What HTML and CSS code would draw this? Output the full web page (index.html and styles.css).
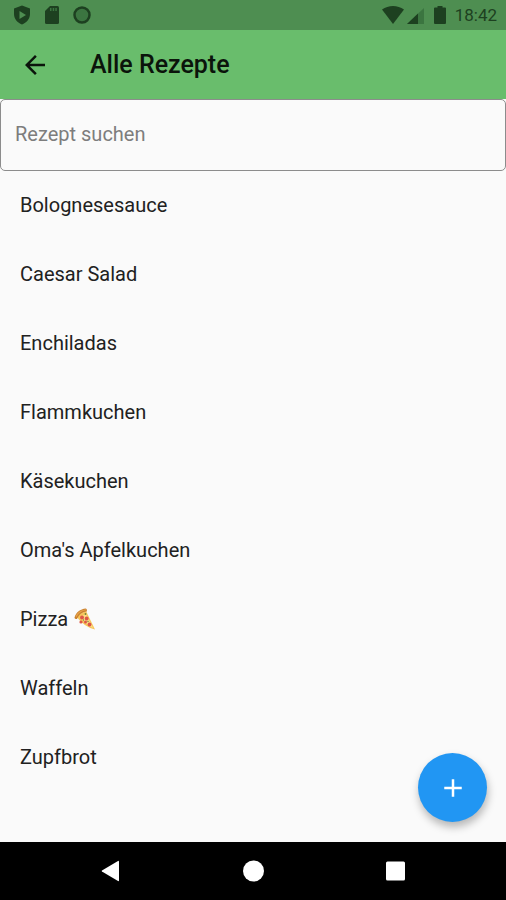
FILE: index.html
```html
<!DOCTYPE html>
<html lang="de">
<head>
<meta charset="utf-8">
<meta name="viewport" content="width=device-width, initial-scale=1">
<title>Alle Rezepte</title>
<link rel="stylesheet" href="styles.css">
</head>
<body>
<div class="status-bar">
  <div class="status-group status-left">
    <svg width="20" height="20" viewBox="0 0 20 20" aria-hidden="true"><path fill-rule="evenodd" d="M10 .5 18 3.500V9c0 5-3.500 8.700-8 10.500C5.500 17.700 2 14 2 9V3.500ZM7.500 6v8l6.500-4Z"/></svg>
    <svg width="20" height="20" viewBox="0 0 20 20" aria-hidden="true"><path d="M8 1h7.500A1.500 1.500 0 0 1 17 2.500v15a1.500 1.500 0 0 1-1.500 1.500h-11A1.500 1.500 0 0 1 3 17.500V6Z"/><path fill="#3b7540" d="M8 3v3h1.500V3Zm2.700 0v3h1.500V3Zm2.600 0v3h1.500V3Z"/></svg>
    <svg width="20" height="20" viewBox="0 0 20 20" aria-hidden="true"><circle cx="10" cy="10" r="7.500" fill="#3b7540" stroke="#1d4020" stroke-width="2.500"/></svg>
  </div>
  <div class="status-group status-right">
    <svg width="22" height="20" viewBox="0 0 22 20" aria-hidden="true"><path d="M0 4.500Q5 1 11 1t11 3.500L11 19Z"/></svg>
    <svg width="17" height="20" viewBox="0 0 17 20" aria-hidden="true"><path fill="#3b7540" d="M17 3v16H0Z"/><path d="M11 8.500V19H0Z"/></svg>
    <svg class="battery" width="12" height="20" viewBox="0 0 12 20" aria-hidden="true"><path d="M3.500 1h5v1.500H11a1 1 0 0 1 1 1V18a1 1 0 0 1-1 1H1a1 1 0 0 1-1-1V3.500a1 1 0 0 1 1-1h2.500Z"/></svg>
    <time class="clock">18:42</time>
  </div>
</div>
<header class="app-bar">
  <button class="back" type="button" aria-label="Zurück">
    <svg width="30" height="30" viewBox="0 0 24 24" aria-hidden="true"><path d="M20 11H7.830l5.590-5.590L12 4l-8 8 8 8 1.410-1.410L7.830 13H20z"/></svg>
  </button>
  <h1 class="title">Alle Rezepte</h1>
</header>
<main class="content">
  <input class="search" type="text" placeholder="Rezept suchen" aria-label="Rezept suchen">
  <ul class="recipes">
    <li class="recipe">Bolognesesauce</li>
    <li class="recipe">Caesar Salad</li>
    <li class="recipe">Enchiladas</li>
    <li class="recipe">Flammkuchen</li>
    <li class="recipe">Käsekuchen</li>
    <li class="recipe">Oma's Apfelkuchen</li>
    <li class="recipe">Pizza
      <svg class="pizza" width="22" height="22" viewBox="0 0 22 22" role="img" aria-label="Pizza">
        <path fill="#f7c65b" d="M2 8 12 3l9 18.500Q10 19 2 8Z"/>
        <path fill="#fbdc84" d="M6 9 12 6l7 14Q11 16 6 9Z"/>
        <path fill="#c9812e" d="M.5 9.500C2 4.500 6 1 12 .5q1.500 1 .8 3C8 4 5 6.500 3 11 1.500 11 .5 10.500.5 9.500Z"/>
        <path fill="#e5a04a" d="M1.500 8.500C3 4.500 6.500 2 12 1.200v1C7.500 3 4.500 5 2.500 9Z"/>
        <g fill="#dd5648"><circle cx="8" cy="9.500" r="2"/><circle cx="12.700" cy="10.500" r="1.900"/><circle cx="7" cy="14" r="1.600"/><circle cx="11.500" cy="14" r="1.500"/><circle cx="15.500" cy="16.500" r="1.900"/></g>
        <g fill="#71843b"><circle cx="11.500" cy="6" r=".9"/><circle cx="9.500" cy="12" r=".7"/><circle cx="14" cy="13.500" r=".7"/></g>
      </svg>
    </li>
    <li class="recipe">Waffeln</li>
    <li class="recipe">Zupfbrot</li>
  </ul>
  <button class="add" type="button" aria-label="Rezept hinzufügen">
    <svg width="30" height="30" viewBox="0 0 24 24" aria-hidden="true"><path d="M19 13h-6v6h-2v-6H5v-2h6V5h2v6h6z"/></svg>
  </button>
</main>
<nav class="nav-bar" aria-label="Systemnavigation">
  <button class="nav-button" type="button" aria-label="Zurück"><svg width="22" height="22" viewBox="0 0 22 22" aria-hidden="true"><path d="M19 1.500v19a.7.7 0 0 1-1 .5L2 11.500a.6.6 0 0 1 0-1L18 1a.7.7 0 0 1 1 .5Z"/></svg></button>
  <button class="nav-button" type="button" aria-label="Startseite"><svg width="22" height="22" viewBox="0 0 22 22" aria-hidden="true"><circle cx="11.500" cy="11" r="10.500"/></svg></button>
  <button class="nav-button" type="button" aria-label="Übersicht"><svg width="22" height="22" viewBox="0 0 22 22" aria-hidden="true"><rect x="2" y="1.500" width="19" height="19" rx="1.500"/></svg></button>
</nav>
</body>
</html>
```
FILE: styles.css
```css
* {
  box-sizing: border-box;
}

body {
  margin: 0;
  min-height: 100vh;
  display: flex;
  flex-direction: column;
  background: #fafafa;
  color: #212121;
  font-family: Roboto, "Liberation Sans", sans-serif;
  font-size: 20px;
}

svg {
  display: block;
  fill: currentColor;
}

button {
  display: grid;
  place-items: center;
  padding: 0;
  border: 0;
  background: none;
  color: inherit;
}

.status-bar {
  display: flex;
  justify-content: space-between;
  align-items: center;
  height: 30px;
  padding: 0 9px 0 12px;
  background: #4e8e51;
  color: #1d4020;
}

.status-group {
  display: flex;
  align-items: center;
}

.status-left {
  gap: 10px;
}

.status-right {
  gap: 3px;
}

.battery {
  margin: 0 6px 0 7px;
}

.clock {
  font-size: 17px;
  line-height: 20px;
}

.app-bar {
  display: flex;
  align-items: center;
  gap: 20px;
  height: 69px;
  background: #69bd6c;
  color: #0b140b;
}

.back {
  width: 70px;
  height: 69px;
}

.title {
  margin: 0;
  font-size: 25px;
  font-weight: 500;
  line-height: 32px;
}

.content {
  position: relative;
  flex: 1;
}

.search {
  display: block;
  width: 100%;
  height: 72px;
  padding: 0 14px 2px;
  border: 1px solid #8c8c8c;
  border-radius: 5px;
  background: #fafafa;
  color: inherit;
  font: inherit;
}

.search::placeholder {
  color: #7d7d7d;
  opacity: 1;
}

.recipes {
  margin: 0;
  padding: 0;
  list-style: none;
}

.recipe {
  display: flex;
  align-items: center;
  gap: 6px;
  height: 69px;
  padding: 0 20px 1px;
}

.add {
  position: absolute;
  right: 19px;
  bottom: 20px;
  width: 69px;
  height: 69px;
  border-radius: 50%;
  background: #2196f3;
  color: #fff;
  box-shadow: 1px 5px 9px rgb(0 0 0 / 28%);
}

.nav-bar {
  display: flex;
  justify-content: center;
  gap: 72px;
  height: 58px;
  background: #000;
  color: #fff;
}

.nav-button {
  width: 70px;
}
```
